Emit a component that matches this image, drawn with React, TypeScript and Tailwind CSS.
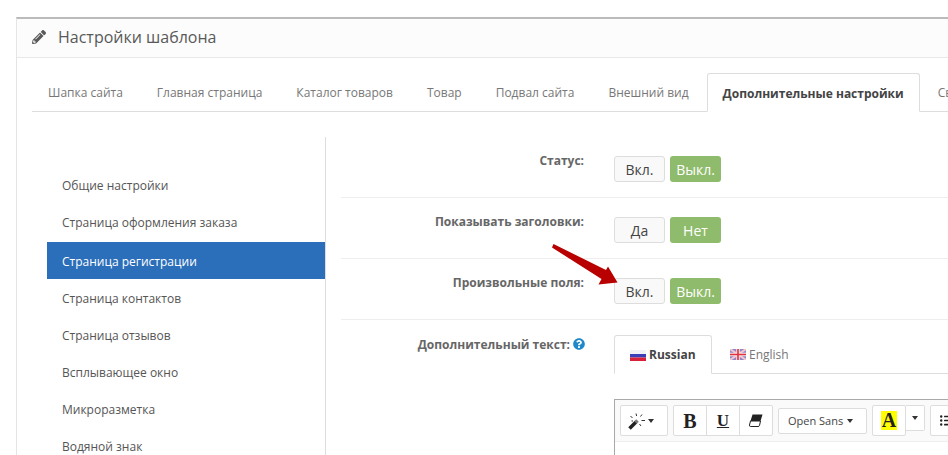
import { FaPencilAlt, FaQuestionCircle, FaListUl } from "react-icons/fa";

const font = { fontFamily: '"Open Sans", sans-serif' };
const serif = { fontFamily: '"Liberation Serif", serif' };

const tabs = [
  "Шапка сайта",
  "Главная страница",
  "Каталог товаров",
  "Товар",
  "Подвал сайта",
  "Внешний вид",
];

const menu = [
  "Общие настройки",
  "Страница оформления заказа",
  "Страница регистрации",
  "Страница контактов",
  "Страница отзывов",
  "Всплывающее окно",
  "Микроразметка",
  "Водяной знак",
];

function Toggle({ on, off }: { on: string; off: string }) {
  return (
    <div className="flex gap-[5px]">
      <div className="flex h-[26px] w-[51px] items-center justify-center rounded-[3px] border border-[#dddddd] bg-[#f9f9f9] text-[14px] text-[#444444]">
        {on}
      </div>
      <div className="flex h-[26px] w-[51px] items-center justify-center rounded-[3px] bg-[#8fbb6c] text-[14px] text-white">
        {off}
      </div>
    </div>
  );
}

function Row({ label, on, off }: { label: string; on: string; off: string }) {
  return (
    <div className="flex h-[61px] border-b border-[#eeeeee] pt-[19px]">
      <div className="-mt-[2px] w-[243px] text-right text-[12px] leading-[14px] font-bold text-[#666666]">
        {label}
      </div>
      <div className="ml-[30px]">
        <Toggle on={on} off={off} />
      </div>
    </div>
  );
}

function RussianFlag() {
  return (
    <svg width="16" height="11" viewBox="0 0 16 11" className="shrink-0">
      <rect width="16" height="4" fill="#f1f1f5" />
      <rect y="4" width="16" height="3.5" fill="#3a3fb8" />
      <rect y="7.5" width="16" height="3.5" fill="#d8203a" />
    </svg>
  );
}

function EnglishFlag() {
  return (
    <svg width="16" height="11" viewBox="0 0 16 11" className="shrink-0">
      <rect width="16" height="11" fill="#8d88c8" />
      <path d="M0 0L16 11M16 0L0 11" stroke="#f3c6cc" strokeWidth="2" />
      <path d="M8 0V11M0 5.5H16" stroke="#f6e6e8" strokeWidth="3.5" />
      <path d="M8 0V11M0 5.5H16" stroke="#e0323f" strokeWidth="1.6" />
    </svg>
  );
}

function WandIcon() {
  return (
    <svg width="20" height="18" viewBox="0 0 20 18" className="shrink-0">
      <path d="M1.5 16.5L8 10" stroke="#222222" strokeWidth="3.6" />
      <path d="M7.5 10.5L9.5 8.5" stroke="#777777" strokeWidth="3.6" />
      <path
        d="M8 1.5L8.6 4M2.5 4L4.5 6M14 2.5L12.5 4.5M13.5 8.5L17 8.5M11.5 12L13 14M3.5 9L5 9"
        stroke="#333333"
        strokeWidth="1"
      />
    </svg>
  );
}

function EraserIcon() {
  return (
    <svg width="14" height="13" viewBox="0 0 14 13">
      <path d="M3.5 0.5H13.5L11.5 7H1.5Z" fill="#222222" />
      <path d="M1.5 7H11.5L10.5 11.5Q10.3 12.5 9 12.5H1.5Q0.3 12.5 0.5 11Z" fill="#ffffff" stroke="#222222" />
    </svg>
  );
}

function Caret({ className }: { className?: string }) {
  return (
    <span
      className={`inline-block h-0 w-0 border-x-[3px] border-t-[4px] border-x-transparent border-t-[#333333] ${className ?? ""}`}
    />
  );
}

export default function App() {
  return (
    <div
      className="relative h-[455px] w-[948px] overflow-hidden bg-white pt-[17px] pl-[16px]"
      style={font}
    >
      <div className="w-[1000px] border-t-2 border-l border-t-[#bbbbbb] border-l-[#e5e5e5]">
        {/* heading */}
        <div className="flex h-[39px] items-center border-b border-[#e8e8e8] bg-[#fcfcfc] pb-[2px] pl-[15px] text-[16px] text-[#595959]">
          <FaPencilAlt className="mr-[12px] text-[14px] text-[#595959]" />
          Настройки шаблона
        </div>

        <div className="pl-[15px]">
          {/* tabs */}
          <div className="mt-[15px] flex h-[39px] items-stretch border-b border-[#dddddd] whitespace-nowrap">
            {tabs.map((t, i) => (
              <div
                key={t}
                className={
                  i === 0
                    ? "mr-[4px] flex items-center pt-[2px] pr-[15px] pl-[16px] text-[12px] text-[#777777]"
                    : "mr-[4px] flex items-center px-[15px] pt-[2px] text-[12px] text-[#777777]"
                }
              >
                {t}
              </div>
            ))}
            <div className="z-10 -ml-px flex h-[39px] items-center rounded-t-[3px] border border-[#dddddd] border-b-white bg-white px-[15px] pt-[2px] text-[12px] font-bold text-[#444444]">
              Дополнительные настройки
            </div>
            <div className="ml-[3px] flex items-center px-[15px] pt-[2px] text-[12px] text-[#777777]">
              Связи
            </div>
          </div>

          <div className="mt-[25px] flex">
            {/* left menu */}
            <div className="ml-[15px] w-[279px] border-r border-[#dddddd] pt-[31px]">
              {menu.map((m, i) => (
                <div
                  key={m}
                  className={
                    m === "Страница регистрации"
                      ? "flex h-[37px] w-[278px] items-center bg-[#2b6eb9] pt-[2px] pl-[15px] text-[12px] text-white"
                      : i < 2
                        ? "flex h-[37px] items-center pb-[2px] pl-[15px] text-[12px] text-[#555555]"
                        : "flex h-[37px] items-center pt-[2px] pl-[15px] text-[12px] text-[#555555]"
                  }
                >
                  {m}
                </div>
              ))}
            </div>

            {/* form */}
            <div className="ml-[15px] w-[607px]">
              <Row label="Статус:" on="Вкл." off="Выкл." />
              <Row label="Показывать заголовки:" on="Да" off="Нет" />
              <Row label="Произвольные поля:" on="Вкл." off="Выкл." />
              <div className="flex pt-[15px]">
                <div className="flex h-[20px] w-[244px] items-start justify-end gap-[3px] pt-[1px] text-[12px] leading-[18px] font-bold text-[#666666]">
                  Дополнительный текст:
                  <FaQuestionCircle className="mt-[2px] text-[12px] text-[#1e88c9]" />
                </div>
                <div className="ml-[29px] min-w-0 flex-1">
                  <div className="flex h-[39px] border-b border-[#dddddd]">
                    <div className="flex h-[39px] w-[98px] items-center gap-[3px] rounded-t-[3px] border border-[#dddddd] border-b-white bg-white pt-[1px] pl-[15px] text-[12px] font-bold text-[#444444]">
                      <RussianFlag />
                      Russian
                    </div>
                    <div className="flex items-center gap-[3px] pt-[1px] pl-[18px] text-[12px] text-[#777777]">
                      <EnglishFlag />
                      English
                    </div>
                  </div>
                  <div className="mt-[25px] border-t border-l border-t-[#a9a9a9] border-l-[#a9a9a9]">
                    <div className="flex h-[42px] items-start border-b border-[#eeeeee] bg-[#fafafa] pt-[5px] pl-[5px]">
                      <div className="flex h-[31px] w-[48px] flex-none items-center rounded-[2px] border border-[#dddddd] bg-white pl-[7px]">
                        <WandIcon />
                        <Caret />
                      </div>
                      <div className="ml-[5px] flex h-[31px] flex-none rounded-[2px] border border-[#dddddd] bg-white text-[#222222]">
                        <div className="flex w-[33px] items-center justify-center border-r border-[#dddddd] text-[20px] font-bold" style={serif}>
                          B
                        </div>
                        <div className="flex w-[33px] items-center justify-center border-r border-[#dddddd] text-[17px] font-bold underline" style={serif}>
                          U
                        </div>
                        <div className="flex w-[32px] items-center justify-center">
                          <EraserIcon />
                        </div>
                      </div>
                      <div className="mt-[3px] ml-[5px] flex h-[26px] w-[89px] flex-none items-center gap-[4px] rounded-[2px] border border-[#dddddd] bg-white pl-[9px] text-[11px] text-[#444444]">
                        Open Sans
                        <Caret />
                      </div>
                      <div className="ml-[5px] flex h-[31px] w-[34px] flex-none items-center justify-center rounded-[2px] border border-[#dddddd] bg-white">
                        <span className="bg-[#ffff00] px-[1px] text-[20px] leading-[19px] font-bold text-[#222222]" style={serif}>
                          A
                        </span>
                      </div>
                      <div className="flex h-[26px] w-[19px] flex-none items-center justify-center rounded-r-[2px] border border-l-0 border-[#dddddd] bg-white">
                        <Caret />
                      </div>
                      <div className="ml-[5px] flex h-[31px] w-[40px] flex-none items-center rounded-[2px] border border-[#dddddd] bg-white pl-[9px]">
                        <FaListUl className="text-[13px] text-[#222222]" />
                      </div>
                    </div>
                    <div className="h-[20px]" />
                  </div>
                </div>
              </div>
            </div>
          </div>
        </div>
      </div>

      {/* red annotation arrow */}
      <svg width="948" height="455" className="pointer-events-none absolute top-0 left-0">
        <polygon
          points="553.5,244 606,270 608,266.5 617.5,282.5 598.5,284.5 601.5,279 552,247.5"
          fill="#b90000"
        />
      </svg>
    </div>
  );
}
